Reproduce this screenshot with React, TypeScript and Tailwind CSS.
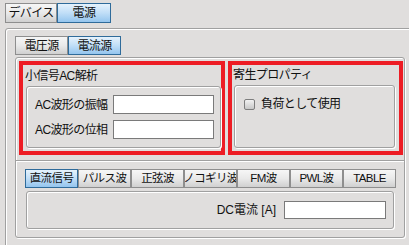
import React from "react";

const font = { fontFamily: '"Liberation Sans", "Noto Sans CJK JP", sans-serif' };

const etched =
  "border border-[#a0a0a0] rounded-[3px] shadow-[1px_1px_0_#ffffff,inset_1px_1px_0_#ffffff]";

function Tab({ label, selected, w }: { label: string; selected?: boolean; w: string }) {
  return (
    <div
      className={`${w} h-full shrink-0 flex items-center justify-center border whitespace-nowrap overflow-hidden ${
        selected
          ? "border-[#2f6b9a] bg-linear-to-b from-[#e6f2fc] via-[#c0def7] to-[#94c5ee]"
          : "border-[#8e8e8e] bg-linear-to-b from-[#f6f6f6] via-[#e9e9e9] to-[#d0d0d0]"
      }`}
    >
      {label}
    </div>
  );
}

function TextBox({ w, h }: { w: string; h: string }) {
  return <div className={`${w} ${h} shrink-0 bg-white border border-[#7a7a7a]`} />;
}

export default function App() {
  const waveTabs = ["直流信号", "パルス波", "正弦波", "ノコギリ波", "FM波", "PWL波", "TABLE"];

  return (
    <div
      className="w-[409px] h-[245px] overflow-hidden bg-[#e0dedd] text-[12px] text-[#111] leading-none tracking-[-0.6px]"
      style={font}
    >
      {/* top tabs */}
      <div className="flex h-[20px] mt-[3px] ml-[5px]">
        <Tab label="デバイス" w="w-[52px]" />
        <Tab label="電源" selected w="w-[54px]" />
      </div>

      {/* outer panel */}
      <div className={`mt-[5px] ml-[5px] w-[420px] h-[240px] pt-[7px] pl-[9px] ${etched}`}>
        <div className="flex h-[19px]">
          <Tab label="電圧源" w="w-[53px]" />
          <Tab label="電流源" selected w="w-[53px]" />
        </div>

        {/* inner panel */}
        <div className={`mt-[2px] w-[390px] h-[181px] ${etched}`}>
          <div className="flex gap-[3px] pt-[3px] pl-[3px]">
            {/* 小信号AC解析 */}
            <div className="w-[206px] h-[94px] border-4 border-[#ed1c24]">
              <div className="h-[21px] pl-[2px] flex items-center">小信号AC解析</div>
              <div className={`ml-[3px] w-[195px] h-[62px] pt-[8px] pl-[8px] flex flex-col gap-[6px] ${etched}`}>
                <div className="flex items-center h-[19px]">
                  <span className="w-[70px] shrink-0 whitespace-nowrap">AC波形の振幅</span>
                  <div className="ml-[8px]">
                    <TextBox w="w-[101px]" h="h-[19px]" />
                  </div>
                </div>
                <div className="flex items-center h-[19px]">
                  <span className="w-[70px] shrink-0 whitespace-nowrap">AC波形の位相</span>
                  <div className="ml-[8px]">
                    <TextBox w="w-[101px]" h="h-[19px]" />
                  </div>
                </div>
              </div>
            </div>

            {/* 寄生プロパティ */}
            <div className="w-[175px] h-[94px] border-4 border-[#ed1c24]">
              <div className="h-[20px] pl-[1px] flex items-center">寄生プロパティ</div>
              <div className={`ml-[2px] w-[161px] h-[63px] pt-[12px] pl-[9px] ${etched}`}>
                <div className="flex items-center gap-[6px]">
                  <div className="w-[11px] h-[11px] rounded-[2px] border border-[#7e7e7e] bg-linear-to-b from-[#f2f2f2] to-[#c8c8c8]" />
                  <span className="whitespace-nowrap">負荷として使用</span>
                </div>
              </div>
            </div>
          </div>

          {/* separator */}
          <div className="mt-[5px] border-t border-[#a0a0a0] shadow-[0_1px_0_#ffffff]" />

          {/* wave tabs */}
          <div className="pl-[9px] pt-[8px]">
            <div className="flex h-[19px] text-[11.5px]">
              {waveTabs.map((t, i) => (
                <Tab key={t} label={t} selected={i === 0} w="w-[53px]" />
              ))}
            </div>
            <div className={`mt-[3px] ml-[1px] w-[368px] h-[38px] pt-[9px] pr-[7px] flex justify-end ${etched}`}>
              <div className="flex items-center h-[18px] gap-[8px]">
                <span className="whitespace-nowrap tracking-normal">DC電流 [A]</span>
                <TextBox w="w-[102px]" h="h-[18px]" />
              </div>
            </div>
          </div>
        </div>
      </div>
    </div>
  );
}
